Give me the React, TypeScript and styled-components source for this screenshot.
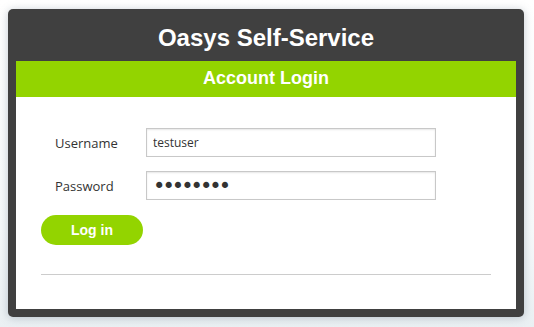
import styled, { createGlobalStyle } from "styled-components";

const GlobalStyle = createGlobalStyle`
    html, body {
        margin: 0;
        padding: 0;
        background: #ffffff;
    }
    body {
        font-family: "Open Sans", "DejaVu Sans", sans-serif;
    }
`;

const App = () => {
    return (
        <>
            <GlobalStyle />
            <Page>
                <Card>
                    <SiteTitle>Oasys Self-Service</SiteTitle>
                    <Inner>
                        <SectionBar>Account Login</SectionBar>
                        <Body>
                            <Form onSubmit={(e) => e.preventDefault()}>
                                <FieldRow>
                                    <Label htmlFor="username">Username</Label>
                                    <TextInput id="username" type="text" defaultValue="testuser" />
                                </FieldRow>
                                <FieldRow>
                                    <Label htmlFor="password">Password</Label>
                                    <TextInput id="password" type="password" defaultValue="password" />
                                </FieldRow>
                                <LoginButton type="submit">Log in</LoginButton>
                            </Form>
                            <Divider />
                        </Body>
                    </Inner>
                </Card>
            </Page>
        </>
    );
};

const Page = styled.div`
    width: 534px;
    height: 327px;
    padding: 9px 0 0 8px;
    box-sizing: border-box;
    background: linear-gradient(180deg, #ffffff 0%, #f6f9fa 70%, #eaf0f3 100%);
`;

const Card = styled.div`
    width: 516px;
    height: 308px;
    box-sizing: border-box;
    background: #404040;
    border-radius: 5px;
    padding: 0 8px 8px 8px;
    display: flex;
    flex-direction: column;
    box-shadow: 0 1px 8px rgba(90, 110, 125, 0.35);
`;

const SiteTitle = styled.h1`
    margin: 0;
    height: 52px;
    line-height: 57px;
    text-align: center;
    color: #ffffff;
    font-family: "Liberation Sans", Arial, sans-serif;
    font-weight: bold;
    font-size: 24px;
`;

const Inner = styled.div`
    flex: 1;
    display: flex;
    flex-direction: column;
    background: #ffffff;
`;

const SectionBar = styled.h2`
    margin: 0;
    height: 36px;
    line-height: 35px;
    background: #93d400;
    color: #ffffff;
    text-align: center;
    font-family: "Liberation Sans", Arial, sans-serif;
    font-weight: bold;
    font-size: 18px;
`;

const Body = styled.div`
    padding: 31px 25px 0 25px;
`;

const Form = styled.form`
    display: flex;
    flex-direction: column;
`;

const FieldRow = styled.div`
    display: flex;
    align-items: center;
    height: 29px;
    margin-bottom: 14px;
`;

const Label = styled.label`
    width: 105px;
    box-sizing: border-box;
    padding-left: 14px;
    color: #333333;
    font-size: 13px;
`;

const TextInput = styled.input`
    width: 290px;
    height: 29px;
    box-sizing: border-box;
    border: 1px solid #c8c8c8;
    box-shadow: inset 0 1px 2px rgba(0, 0, 0, 0.1);
    padding: 0 6px;
    font-family: ${(p) => (p.type === "password" ? '"DejaVu Sans", sans-serif' : '"Open Sans", "DejaVu Sans", sans-serif')};
    font-size: ${(p) => (p.type === "password" ? "21px" : "12px")};
    letter-spacing: ${(p) => (p.type === "password" ? "-3px" : "0")};
    color: #333333;
    outline: none;
`;

const LoginButton = styled.button`
    width: 102px;
    height: 30px;
    margin-top: 1px;
    border: none;
    border-radius: 15px;
    background: #93d400;
    color: #ffffff;
    font-family: "Liberation Sans", Arial, sans-serif;
    font-weight: bold;
    font-size: 14px;
    cursor: pointer;
`;

const Divider = styled.hr`
    margin: 29px 0 0 0;
    border: none;
    border-top: 1px solid #cccccc;
`;

export default App;
